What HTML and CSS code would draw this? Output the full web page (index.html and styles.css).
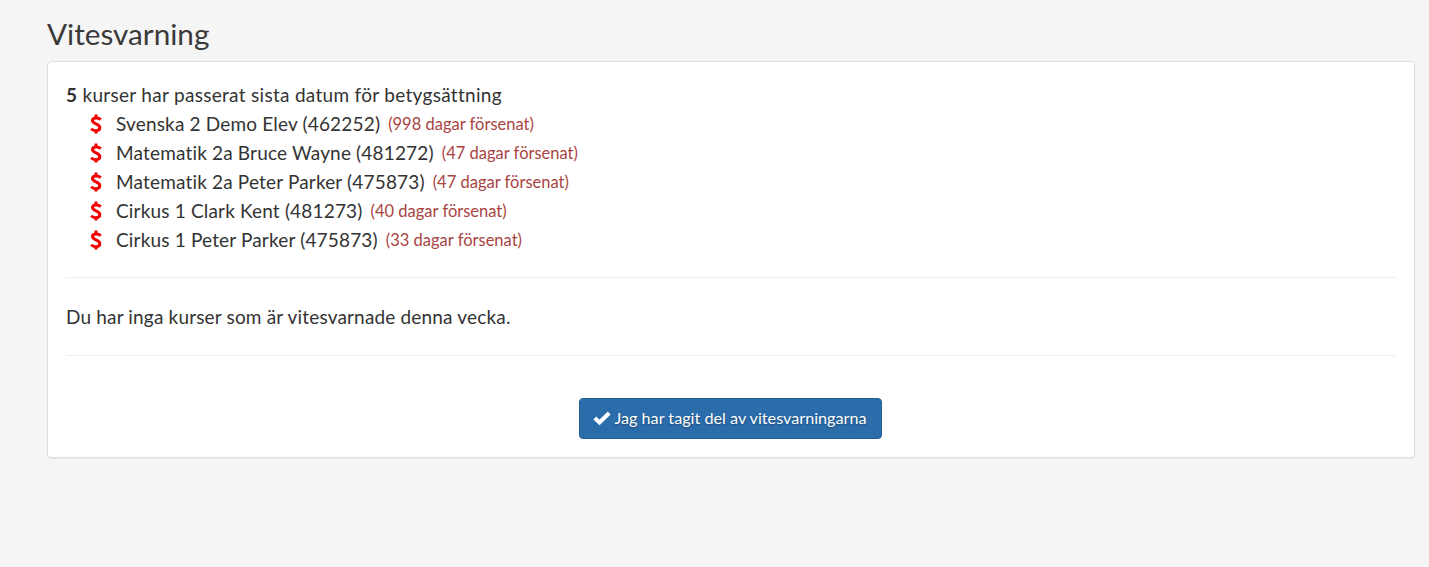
FILE: index.html
```html
<!DOCTYPE html>
<html lang="sv">
<head>
<meta charset="utf-8">
<title>Vitesvarning</title>
<link rel="stylesheet" href="styles.css">
</head>
<body>
<main class="page">
  <h1 class="title">Vitesvarning</h1>
  <section class="panel">
    <p class="summary"><strong>5</strong> kurser har passerat sista datum för betygsättning</p>
    <ul class="courses">
      <li class="course"><svg class="dollar" viewBox="0 0 12 20"><path d="M10.800 5.600C9.600 4.500 8 3.900 6.300 3.900 4 3.900 2.500 5 2.500 6.600c0 3.900 7.300 2.500 7.300 7 0 1.900-1.500 3.100-3.700 3.100-1.900 0-3.600-.6-4.900-2M6 .5v3.400M6 16.700v2.900" fill="none" stroke="#f00000" stroke-width="3"/></svg><span>Svenska 2 Demo Elev (462252)</span><small class="late">(998 dagar försenat)</small></li>
      <li class="course"><svg class="dollar" viewBox="0 0 12 20"><path d="M10.800 5.600C9.600 4.500 8 3.900 6.300 3.900 4 3.900 2.500 5 2.500 6.600c0 3.900 7.300 2.500 7.300 7 0 1.900-1.500 3.100-3.700 3.100-1.900 0-3.600-.6-4.900-2M6 .5v3.400M6 16.700v2.900" fill="none" stroke="#f00000" stroke-width="3"/></svg><span>Matematik 2a Bruce Wayne (481272)</span><small class="late">(47 dagar försenat)</small></li>
      <li class="course"><svg class="dollar" viewBox="0 0 12 20"><path d="M10.800 5.600C9.600 4.500 8 3.900 6.300 3.900 4 3.900 2.500 5 2.500 6.600c0 3.900 7.300 2.500 7.300 7 0 1.900-1.500 3.100-3.700 3.100-1.900 0-3.600-.6-4.900-2M6 .5v3.400M6 16.700v2.900" fill="none" stroke="#f00000" stroke-width="3"/></svg><span>Matematik 2a Peter Parker (475873)</span><small class="late">(47 dagar försenat)</small></li>
      <li class="course"><svg class="dollar" viewBox="0 0 12 20"><path d="M10.800 5.600C9.600 4.500 8 3.900 6.300 3.900 4 3.900 2.500 5 2.500 6.600c0 3.900 7.300 2.500 7.300 7 0 1.900-1.500 3.100-3.700 3.100-1.900 0-3.600-.6-4.900-2M6 .5v3.400M6 16.700v2.900" fill="none" stroke="#f00000" stroke-width="3"/></svg><span>Cirkus 1 Clark Kent (481273)</span><small class="late">(40 dagar försenat)</small></li>
      <li class="course"><svg class="dollar" viewBox="0 0 12 20"><path d="M10.800 5.600C9.600 4.500 8 3.900 6.300 3.900 4 3.900 2.500 5 2.500 6.600c0 3.900 7.300 2.500 7.300 7 0 1.900-1.500 3.100-3.700 3.100-1.900 0-3.600-.6-4.900-2M6 .5v3.400M6 16.700v2.900" fill="none" stroke="#f00000" stroke-width="3"/></svg><span>Cirkus 1 Peter Parker (475873)</span><small class="late">(33 dagar försenat)</small></li>
    </ul>
    <hr class="rule rule-first">
    <p class="none">Du har inga kurser som är vitesvarnade denna vecka.</p>
    <hr class="rule rule-second">
    <div class="actions">
      <button class="confirm" type="button"><svg class="check" viewBox="0 0 18 14"><path d="M1.800 7 6.500 11.500 16.200 2" fill="none" stroke="#fff" stroke-width="4"/></svg>Jag har tagit del av vitesvarningarna</button>
    </div>
  </section>
</main>
</body>
</html>
```

FILE: styles.css
```css
* { box-sizing: border-box; }
html, body { margin: 0; height: 100%; }
body {
  background: #f5f5f5;
  color: #333;
  font-family: Lato, "Noto Sans", sans-serif;
  font-size: 19px;
  line-height: 24px;
  letter-spacing: .17px;
}
.page { padding: 14px 14px 0 47px; }
.title {
  margin: 0 0 8px;
  font-size: 29.700px;
  line-height: 39px;
  font-weight: 400;
  letter-spacing: 0;
  color: #3a3a3a;
}
.panel {
  height: 397px;
  padding: 21px 18px 0;
  background: #fff;
  border: 1px solid #ddd;
  border-radius: 4px;
  box-shadow: 0 1px 1px rgba(0,0,0,.05);
}
.summary { margin: 0; letter-spacing: .3px; }
.courses { list-style: none; margin: 2px 0 0; padding: 0 0 0 24px; }
.course { display: flex; align-items: center; height: 29px; }
.dollar { width: 12px; height: 20px; margin-right: 14px; flex: none; }
.late { margin-left: 8px; font-size: 16.500px; letter-spacing: 0; color: #a94442; }
.rule { border: 0; border-top: 1px solid #eee; margin: 0; }
.rule-first { margin-top: 23px; }
.none { margin: 27px 0 26px; }
.actions { display: flex; justify-content: center; margin-top: 42px; }
.confirm {
  display: flex;
  align-items: center;
  height: 41px;
  width: 303px;
  margin-right: 2px;
  padding: 0 0 2px;
  justify-content: center;
  background: #2b6cab;
  color: #fff;
  border: 1px solid #245e97;
  border-radius: 4px;
  font: inherit;
  font-size: 16.200px;
  letter-spacing: 0;
  text-shadow: 0 1px 2px rgba(0,0,0,.35);
}
.check { width: 18px; height: 14px; margin-right: 3px; }
```
